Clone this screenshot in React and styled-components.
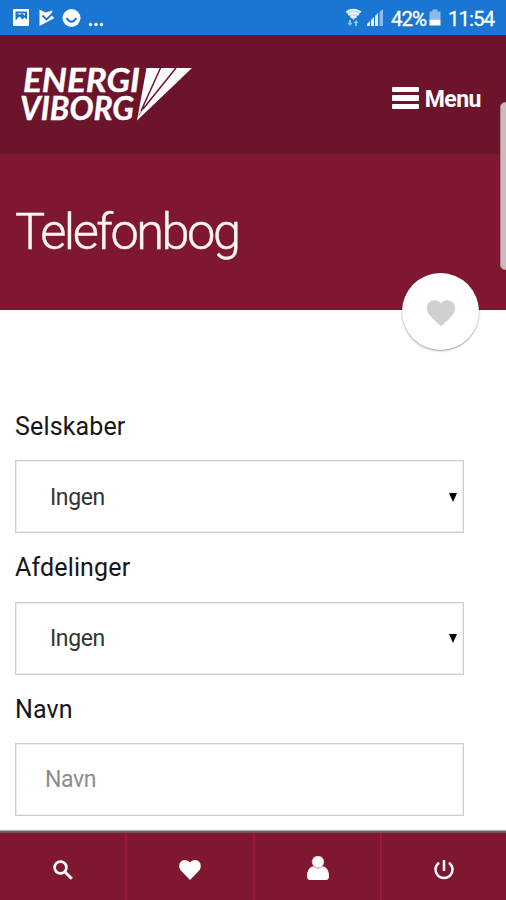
import React from 'react';
import styled, { createGlobalStyle } from 'styled-components';

const GlobalStyle = createGlobalStyle`
  * {
    box-sizing: border-box;
  }
  body {
    margin: 0;
    background: #fff;
    font-family: Roboto, "Liberation Sans", sans-serif;
  }
`

const Screen = styled.div`
  position: relative;
  display: flex;
  flex-direction: column;
  width: 506px;
  height: 900px;
  overflow: hidden;
  background: #fff;
`

const StatusBar = styled.div`
  display: flex;
  flex: none;
  justify-content: space-between;
  height: 35px;
  padding: 0 12px;
  background: #1976d2;
  color: #fff;
`

const StatusRight = styled.div`
  display: flex;
  gap: 5px;
`

const StatusText = styled.span`
  font-size: 20.5px;
  line-height: 38px;
  letter-spacing: -1px;
  white-space: nowrap;
  -webkit-text-stroke: 0.3px #fff;
`

const Battery = styled.svg`
  margin: 0 2px 0 -2px;
`

const Header = styled.header`
  display: flex;
  flex: none;
  justify-content: space-between;
  height: 119px;
  padding: 0 25px 0 16px;
  background: #6b142b;
`

const LogoLink = styled.a`
  display: block;
  height: 119px;
`

const MenuButton = styled.button`
  display: flex;
  align-items: center;
  gap: 6px;
  height: 36px;
  margin-top: 47px;
  padding: 0;
  border: none;
  background: none;
  color: #fff;
  font-family: inherit;
  font-size: 23px;
  font-weight: 700;
  line-height: 36px;
  letter-spacing: -0.5px;
`

const MenuLines = styled.span`
  display: flex;
  flex-direction: column;
  gap: 3px;
  width: 27px;
  margin-top: -4px;
`

const MenuLine = styled.span`
  height: 5.5px;
  border-radius: 1px;
  background: #fff;
`

const TitleBanner = styled.div`
  position: relative;
  flex: none;
  height: 156px;
  padding: 44px 15px 0;
  background: #801731;
`

const Title = styled.h1`
  margin: 0;
  color: #fff5f2;
  font-size: 50.5px;
  font-weight: 300;
  line-height: 68px;
  letter-spacing: -2.5px;
  -webkit-text-stroke: 0.4px #fff5f2;
`

const FavouriteButton = styled.button`
  position: absolute;
  right: 27px;
  bottom: -40px;
  display: flex;
  align-items: center;
  justify-content: center;
  width: 77px;
  height: 77px;
  padding: 3px 0 0;
  border: none;
  border-radius: 50%;
  background: #fff;
  box-shadow: 0 1px 2px rgba(0, 0, 0, 0.4);
`

const Form = styled.form`
  flex: 1;
  min-height: 0;
  padding: 99px 42px 0 15px;
`

const Field = styled.div`
  height: 141.3px;
`

const Label = styled.label`
  display: block;
  height: 51.4px;
  color: #161616;
  font-size: 25px;
  line-height: 36px;
  letter-spacing: 0.15px;
`

const Control = styled.div`
  display: flex;
  align-items: center;
  justify-content: space-between;
  height: 73px;
  padding: 1px 6px 0 ${props => props.$placeholder ? '29px' : '34px'};
  border: 1px solid #cfcfcf;
  box-shadow: inset 0 0 0 1px #ededed;
  background: #fff;
  color: ${props => props.$placeholder ? '#8c8c8c' : '#333'};
  font-size: 23px;
  letter-spacing: -0.4px;
`

const Arrow = styled.span`
  border-top: 9px solid #000;
  border-left: 4px solid transparent;
  border-right: 4px solid transparent;
`

const BottomNav = styled.nav`
  display: grid;
  flex: none;
  grid-template-columns: 127px 128px 127px 1fr;
  height: 69px;
  border-top: 2px solid #76555f;
  background: #801731;
  box-shadow: 0 -1px 1px rgba(0, 0, 0, 0.3);
`

const NavItem = styled.button`
  display: flex;
  align-items: center;
  justify-content: center;
  padding: 6px 0 0;
  border: none;
  border-right: ${props => props.$last ? 'none' : '2px solid #961b3e'};
  background: none;
`

const Scrollbar = styled.div`
  position: absolute;
  top: 102px;
  right: -4px;
  width: 10px;
  height: 168px;
  border: 1px solid #a99098;
  border-radius: 5px;
  background: #d1b8c0;
`

const heartPath = 'M12 21.35l-1.45-1.32C5.4 15.36 2 12.28 2 8.5 2 5.42 4.42 3 7.5 3c1.74 0 3.41.81 4.5 2.09C13.09 3.81 14.76 3 16.5 3 19.58 3 22 5.42 22 8.5c0 3.78-3.4 6.86-8.55 11.54z'

const Heart = ({ size, color }) => (
  <svg width={size} height={size} viewBox="0 0 24 24">
    <path d={heartPath} fill={color} />
  </svg>
)

const NotificationIcons = () => (
  <svg width="94" height="35" viewBox="12 0 94 35" fill="#fff">
    <path fillRule="evenodd" d="M14 9h14q1 0 1 1v15q0 1-1 1H14q-1 0-1-1V10q0-1 1-1zm1.500 2.500v9l4-4 3 3 2-2 2.500 2v-8z" />
    <path d="M17 13l3 2 2-2 3 3v-3z" opacity=".7" />
    <path d="M39.500 9.500l6 3 7-2-1 5 3 2.500-15 8z" />
    <path d="M42.500 15.500l4 4 7-7" fill="none" stroke="#1976d2" strokeWidth="1.800" />
    <circle cx="71.500" cy="18" r="9" />
    <path d="M66.500 18q5 7.500 10 0" fill="none" stroke="#1976d2" strokeWidth="2.200" />
    <circle cx="90.500" cy="24.500" r="1.700" />
    <circle cx="96" cy="24.500" r="1.700" />
    <circle cx="101.500" cy="24.500" r="1.700" />
  </svg>
)

const SignalIcons = () => (
  <svg width="40" height="35" viewBox="346 0 40 35" fill="#fff">
    <path d="M346 12q7.500-5.500 15 0L353.500 20z" opacity=".75" />
    <path d="M346 12q7.500-5 15 0M348 15q5.500-4 11 0M350.500 17.500q3-2 6 0" fill="none" stroke="#fff" strokeWidth="1.300" />
    <path d="M351 20v3h1.500l-2.500 3-2.500-3h1.500v-3zM357 26v-3h1.500l-2.500-3-2.500 3h1.500v3z" opacity=".55" />
    <path d="M367 24l3-3v5h-3zM371 20l3-3v9h-3zM375 16l3-3v13h-3z" opacity=".9" />
    <path d="M379.500 12l3.500-3v17h-3.500z" opacity=".5" />
  </svg>
)

const BatteryIcon = () => (
  <Battery width="12" height="35" viewBox="429 0 12 35" fill="#fff">
    <path d="M432.500 9.500h5v2h3v8h-11v-8h3z" opacity=".5" />
    <path d="M429.500 19.500h11v6h-11z" />
  </Battery>
)

const Logo = () => (
  <svg width="180" height="119" viewBox="16 35 180 119" fill="#fff">
    <text fontFamily="Lato, sans-serif" fontSize="33" fontWeight="700" fontStyle="italic" stroke="#fff" strokeWidth=".4">
      <tspan x="23" y="92" textLength="117" lengthAdjust="spacingAndGlyphs">ENERGI</tspan>
      <tspan x="20" y="120" textLength="114" lengthAdjust="spacingAndGlyphs">VIBORG</tspan>
    </text>
    <path d="M146.500 68H192L137 120.500z" />
    <path d="M160.500 68L141 111M176 68L143 109" stroke="#6b142b" strokeWidth="1.500" />
    <path d="M141 111l-2.500 5M143 109l-4 6" stroke="#6b142b" strokeWidth=".6" opacity=".6" />
  </svg>
)

const SearchIcon = () => (
  <svg width="20" height="20" viewBox="0 0 20 20" fill="none" stroke="#fff">
    <circle cx="7.500" cy="7.500" r="5.900" strokeWidth="2.700" />
    <path d="M11.800 11.800l7 7" strokeWidth="3" />
  </svg>
)

const NavHeart = () => (
  <svg width="22" height="20" viewBox="0 0 22 20" fill="#fff">
    <path d="M11 20L1.600 10.200C-1 7 0 0 6 0q3.500 0 5 2.500Q12.500 0 16 0c6 0 7 7 4.400 10.200z" />
  </svg>
)

const PersonIcon = () => (
  <svg width="22" height="28" viewBox="0 0 22 28" fill="#fff">
    <path d="M5 10.500h12q5 2.500 5 9.500 0 4-3 4H3q-3 0-3-4 0-7 5-9.500z" />
    <circle cx="11" cy="6" r="6.200" stroke="#801731" strokeWidth=".5" />
  </svg>
)

const PowerIcon = () => (
  <svg width="20" height="20" viewBox="0 0 20 20" fill="none" stroke="#fff" strokeWidth="2.500">
    <path d="M5 2.700a8.500 8.500 0 1 0 10 0M10 0v11" />
  </svg>
)

const fields = [
  { label: 'Selskaber', value: 'Ingen' },
  { label: 'Afdelinger', value: 'Ingen' },
  { label: 'Navn', value: 'Navn', placeholder: true },
]

const navIcons = [SearchIcon, NavHeart, PersonIcon, PowerIcon]

class App extends React.Component {
  render () {
    return (
      <Screen>
        <GlobalStyle />
        <StatusBar>
          <NotificationIcons />
          <StatusRight>
            <SignalIcons />
            <StatusText>42%</StatusText>
            <BatteryIcon />
            <StatusText>11:54</StatusText>
          </StatusRight>
        </StatusBar>
        <Header>
          <LogoLink><Logo /></LogoLink>
          <MenuButton>
            <MenuLines><MenuLine /><MenuLine /><MenuLine /></MenuLines>
            Menu
          </MenuButton>
        </Header>
        <TitleBanner>
          <Title>Telefonbog</Title>
          <FavouriteButton><Heart size={34} color="#d0d0d0" /></FavouriteButton>
        </TitleBanner>
        <Form>
          {fields.map(field => (
            <Field key={field.label}>
              <Label>{field.label}</Label>
              <Control $placeholder={field.placeholder}>
                {field.value}
                {!field.placeholder && <Arrow />}
              </Control>
            </Field>
          ))}
        </Form>
        <BottomNav>
          {navIcons.map((Icon, index) => (
            <NavItem key={index} $last={index === navIcons.length - 1}><Icon /></NavItem>
          ))}
        </BottomNav>
        <Scrollbar />
      </Screen>
    )
  }
}

export default App;
